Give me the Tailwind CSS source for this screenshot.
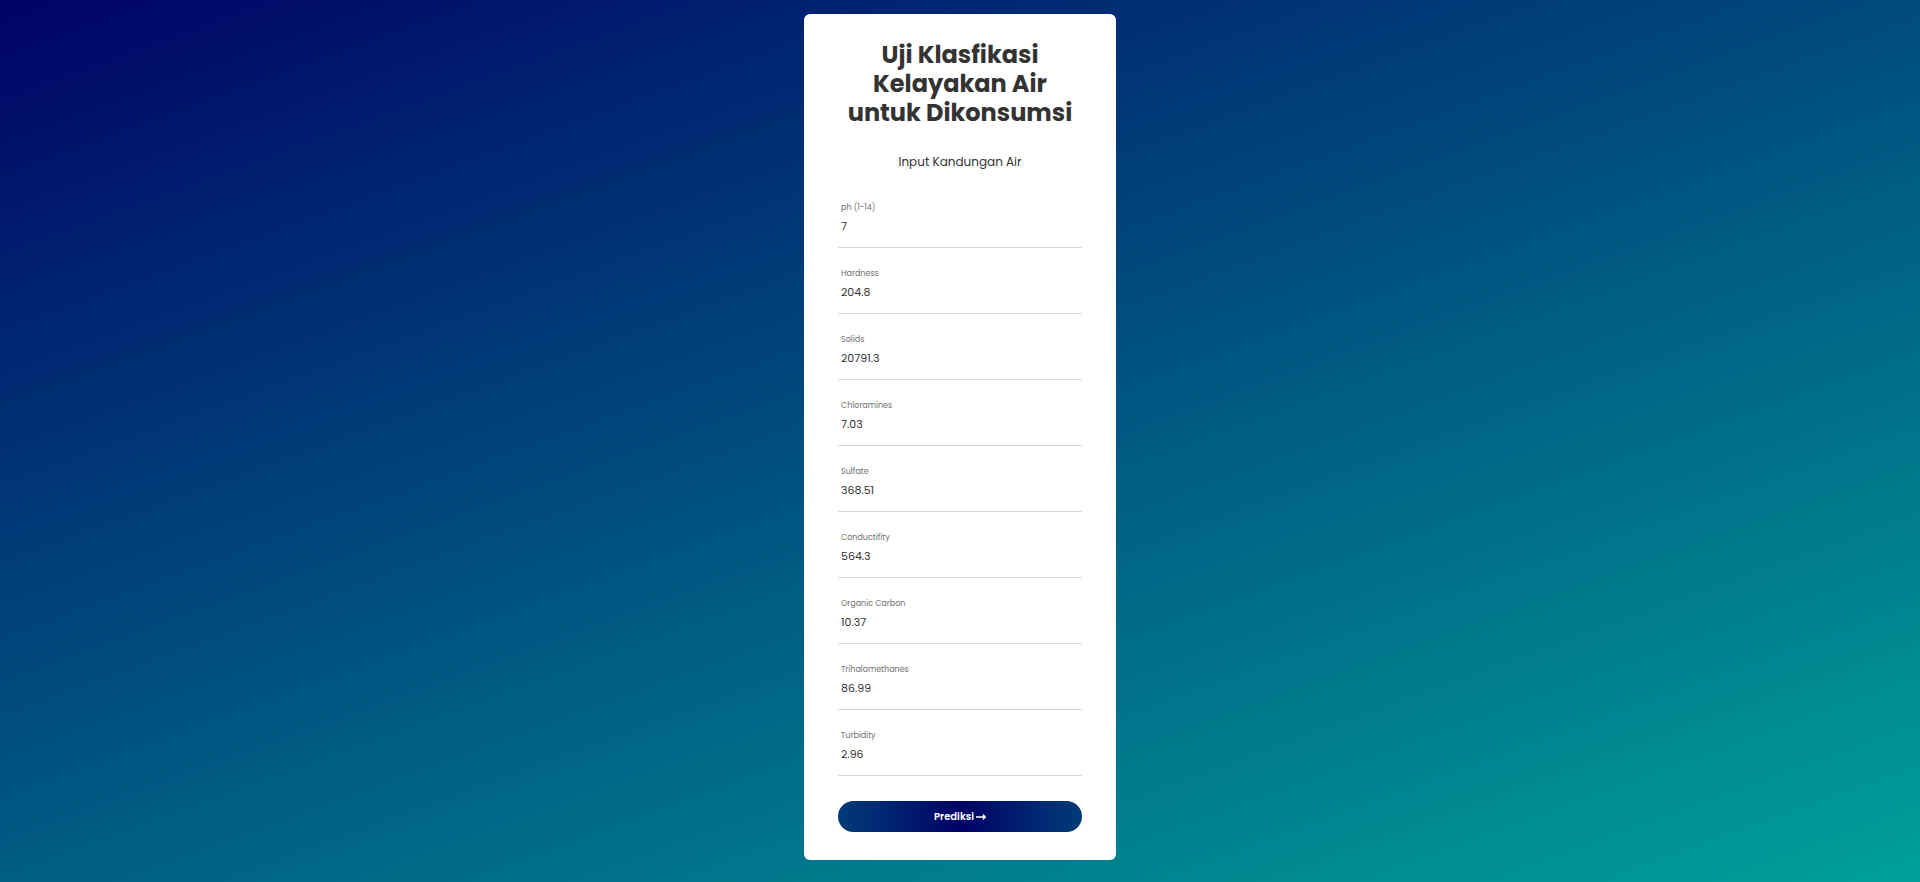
<!DOCTYPE html>
<html lang="id">
<head>
<meta charset="utf-8">
<meta name="viewport" content="width=device-width, initial-scale=1">
<title>Uji Klasfikasi Kelayakan Air</title>
<script src="https://cdn.jsdelivr.net/npm/@tailwindcss/browser@4"></script>
</head>
<body class="flex min-h-screen items-start justify-center bg-linear-[160deg,#000266,#005480,#00a099] px-4 pt-[14px] pb-[22px] font-['Poppins','Inter',sans-serif] text-[#333333]">
<main class="w-full max-w-[312px] rounded-md bg-white px-[34px] pt-[26px] pb-7">
<form>
<h1 class="text-center text-2xl leading-[29px] font-bold">Uji Klasfikasi<br>Kelayakan Air<br>untuk Dikonsumsi</h1>
<p class="mt-[25px] mb-[10px] text-center text-[12px] leading-5">Input Kandungan Air</p>
<div class="flex h-[66px] flex-col border-b border-[#d9d9d9] px-[3px] pt-[19px]"><label for="ph" class="text-[8px] leading-[14px] text-[#707070]">ph (1-14)</label><input id="ph" name="ph" value="7" class="h-[22px] w-full bg-transparent text-[11px] outline-none"></div>
<div class="flex h-[66px] flex-col border-b border-[#d9d9d9] px-[3px] pt-[19px]"><label for="hardness" class="text-[8px] leading-[14px] text-[#707070]">Hardness</label><input id="hardness" name="hardness" value="204.8" class="h-[22px] w-full bg-transparent text-[11px] outline-none"></div>
<div class="flex h-[66px] flex-col border-b border-[#d9d9d9] px-[3px] pt-[19px]"><label for="solids" class="text-[8px] leading-[14px] text-[#707070]">Solids</label><input id="solids" name="solids" value="20791.3" class="h-[22px] w-full bg-transparent text-[11px] outline-none"></div>
<div class="flex h-[66px] flex-col border-b border-[#d9d9d9] px-[3px] pt-[19px]"><label for="chloramines" class="text-[8px] leading-[14px] text-[#707070]">Chloramines</label><input id="chloramines" name="chloramines" value="7.03" class="h-[22px] w-full bg-transparent text-[11px] outline-none"></div>
<div class="flex h-[66px] flex-col border-b border-[#d9d9d9] px-[3px] pt-[19px]"><label for="sulfate" class="text-[8px] leading-[14px] text-[#707070]">Sulfate</label><input id="sulfate" name="sulfate" value="368.51" class="h-[22px] w-full bg-transparent text-[11px] outline-none"></div>
<div class="flex h-[66px] flex-col border-b border-[#d9d9d9] px-[3px] pt-[19px]"><label for="conductifity" class="text-[8px] leading-[14px] text-[#707070]">Conductifity</label><input id="conductifity" name="conductifity" value="564.3" class="h-[22px] w-full bg-transparent text-[11px] outline-none"></div>
<div class="flex h-[66px] flex-col border-b border-[#d9d9d9] px-[3px] pt-[19px]"><label for="carbon" class="text-[8px] leading-[14px] text-[#707070]">Organic Carbon</label><input id="carbon" name="carbon" value="10.37" class="h-[22px] w-full bg-transparent text-[11px] outline-none"></div>
<div class="flex h-[66px] flex-col border-b border-[#d9d9d9] px-[3px] pt-[19px]"><label for="trihalomethanes" class="text-[8px] leading-[14px] text-[#707070]">Trihalomethanes</label><input id="trihalomethanes" name="trihalomethanes" value="86.99" class="h-[22px] w-full bg-transparent text-[11px] outline-none"></div>
<div class="flex h-[66px] flex-col border-b border-[#d9d9d9] px-[3px] pt-[19px]"><label for="turbidity" class="text-[8px] leading-[14px] text-[#707070]">Turbidity</label><input id="turbidity" name="turbidity" value="2.96" class="h-[22px] w-full bg-transparent text-[11px] outline-none"></div>
<button type="submit" class="mt-[25px] flex h-[31px] w-full items-center justify-center gap-[2px] rounded-full bg-linear-[to_right,#003b78,#000266,#003b78] text-[10px] font-semibold text-white">Prediksi
<svg class="h-[6px] w-[10px]" viewBox="0 0 10 6" fill="currentColor" aria-hidden="true"><path d="M0 2.3h6.8V.6c0-.4.4-.6.7-.3L9.8 2.6c.2.2.2.6 0 .8L7.5 5.7c-.3.3-.7.1-.7-.3V3.7H0z"/></svg></button>
</form>
</main>
</body>
</html>
